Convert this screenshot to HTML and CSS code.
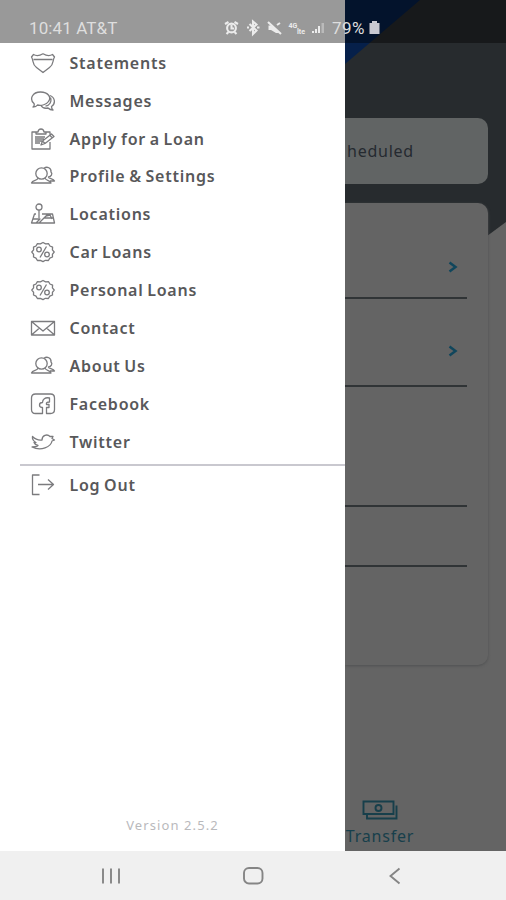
FILE: index.html
```html
<!DOCTYPE html>
<html lang="en">
<head>
<meta charset="utf-8">
<title>Menu</title>
<link rel="stylesheet" href="styles.css">
</head>
<body>
<svg class="defs" aria-hidden="true">
  <symbol id="people" viewBox="0 0 26 24"><circle cx="11.500" cy="9.500" r="5.700"/><path d="M8 14C7.500 17 2.500 15.500 1.500 19H21C20 15.500 15.500 17 15 14M14 4.300C17 2 21.500 4 21 8C23 10 21 12.500 18.500 13C19 15 23.500 14 24.500 17H20"/></symbol>
  <symbol id="percent" viewBox="0 0 26 24"><path d="M13 2.500l2.600 1.400 3-.2 1.300 2.300 2.700 1.200-.2 2.700L24.200 12l-1.800 2.300.1 2.700-2.700 1.200-1.400 2.300-3-.2L13 21.600l-2.600-1.300-3 .2L6 18.200 3.500 17l.1-2.700L1.800 12l1.800-2.200L3.500 7.200 6 6l1.400-2.300 3 .2zM16.500 6.500l-6.500 11"/><circle cx="9" cy="9.500" r="2.300"/><circle cx="17" cy="14.500" r="2.300"/></symbol>
</svg>
<div class="phone">
  <div class="screen">
    <nav class="drawer">
      <ul class="menu">
        <li><svg viewBox="0 0 26 24"><path d="M3.500 3.500C6 5 10 4.500 13 2.800C16 4.500 20 5 22.500 3.500L24.500 6C22 10 24.500 12.500 19.500 16.500L13 21.500L6.500 16.500C1.500 12.500 4 10 1.500 6ZM3.500 8.500H22.500"/></svg><span>Statements</span></li>
        <li><svg viewBox="0 0 26 24"><path d="M4 14.500C-1 10 2.500 3 10.500 3S21.500 8.500 18.500 12.500C16.500 15.500 11.500 17 7.500 16C6.500 17.500 5 18 3 18C4.500 16.800 4.500 15.800 4 14.500ZM20 6.500C25 8.500 26 14.500 21.500 17.500C21.500 19 22 20 23 21C20.500 21 19 20 18 19C14.500 19.700 12 18.500 11 16.500M20.500 8.500C22 13 19.500 16.500 15.500 17.200"/></svg><span>Messages</span></li>
        <li><svg viewBox="0 0 26 24"><path d="M8 5H2V22H20V15M14 5H20V8M6 7V5H8C8.500 1 13.500 1 14 5H16V7ZM5 10H15M5 12H14M5 14H12M5 16H10M11 18L12.500 14L21.500 7L24 9.500L15 16.500ZM12.500 14L15 16.500M20 8.500L22.500 11"/></svg><span>Apply for a Loan</span></li>
        <li><svg><use href="#people"/></svg><span>Profile &amp; Settings</span></li>
        <li><svg viewBox="0 0 26 24"><circle cx="9" cy="5" r="3"/><path d="M9 8V16M6 12H4.500L1.500 21H24.500L22.500 12H12M3 17H10L6 21M9 21L18 12M14 16H23M16 14L20 13L22 17"/></svg><span>Locations</span></li>
        <li><svg><use href="#percent"/></svg><span>Car Loans</span></li>
        <li><svg><use href="#percent"/></svg><span>Personal Loans</span></li>
        <li><svg viewBox="0 0 26 24"><path d="M1.500 5.500H24.500V19H1.500ZM1.500 5.500L13 15L24.500 5.500M1.500 19L9.500 12M24.500 19L16.500 12"/></svg><span>Contact</span></li>
        <li><svg><use href="#people"/></svg><span>About Us</span></li>
        <li><svg viewBox="0 0 26 24"><path d="M12.500 21.500H5.500Q1.500 21.500 1.500 17.500V6Q1.500 2 5.500 2H20.500Q24.500 2 24.500 6V17.500Q24.500 21.500 20.500 21.500H16.500V15.500H19V12.500H16.500C16 10.500 17 10 19.500 10V6C15 5 12.500 7.500 12.500 10.500C10.500 10.500 9.500 11.500 9.500 13C9.500 14.500 10.500 15.500 12.500 15.500Z"/></svg><span>Facebook</span></li>
        <li><svg viewBox="0 0 26 24"><path d="M2.500 6.500C5.500 9.500 8 10.500 12 10C12 5.500 17 3.500 20 6.500L23 6.500L22 8.500L24.500 10L22 11C21 17 11 21.500 2 17C5 17 7 16.500 8 15.500C6 15 4.500 14 4 12.500H6C3.500 11 2 9 2.500 6.500Z"/></svg><span>Twitter</span></li>
      </ul>
      <div class="logout"><svg viewBox="0 0 26 24"><path d="M9.500 2H2.500V21.500H9.500M8 11.500H23.500M18 6.500L23.500 11.500L18 16.500"/></svg><span>Log Out</span></div>
      <p class="version">Version 2.5.2</p>
    </nav>
    <main class="behind">
      <section class="card scheduled">heduled</section>
      <section class="card accounts">
        <div class="row r1"><svg viewBox="0 0 10 12"><path d="M1.500 1.500L7.500 6L1.500 10.500"/></svg></div>
        <div class="row r2"><svg viewBox="0 0 10 12"><path d="M1.500 1.500L7.500 6L1.500 10.500"/></svg></div>
        <div class="row r3"></div>
        <div class="row r4"></div>
      </section>
      <div class="transfer"><svg viewBox="0 0 36 20"><path d="M1.500 1.500H31.500V14H1.500ZM34.500 5.500V18.500H5V15"/><circle cx="16.500" cy="8" r="3"/></svg><span>Transfer</span></div>
    </main>
    <header class="status">
      <span class="carrier">10:41 AT&amp;T</span>
      <svg class="signals" viewBox="0 0 104 18">
        <g class="line"><circle cx="8.500" cy="9" r="4.400"/><path d="M8.500 6V9.500H11M2 5L5.500 3M15 5L11.500 3M3.500 15L5.500 13M13.500 15L11.500 13"/><path d="M26.500 5L33.500 11.500L30 15V2.500L33.500 5.500L26.500 12M24 8.500H26M34 8.500H36.500"/><path d="M45 3L58 15M54 6L57 4"/></g>
        <path d="M45.500 6.500H48L51 9L56 14L53 14L48 11H45.500ZM89 14V12H91V14ZM92 14V10H94V14ZM95 14V7H97V14Z"/>
        <path class="weak" d="M98.500 14V4H101V14Z"/>
        <text x="65.500" y="9">4G</text>
        <text x="74" y="14.500">lte</text>
      </svg>
      <span class="charge">79%</span>
      <svg class="battery" viewBox="0 0 11 14"><path d="M3 0H8V2H10.500V13H.5V2H3Z"/></svg>
    </header>
  </div>
  <footer class="navbar">
    <svg viewBox="0 0 24 24"><path d="M4 4.500V19.500M12 4.500V19.500M20 4.500V19.500"/></svg>
    <svg viewBox="0 0 24 24"><rect x="3" y="4" width="18.500" height="15.500" rx="5"/></svg>
    <svg viewBox="0 0 24 24"><path d="M16.500 4.500L7.500 12L16.500 19.500"/></svg>
  </footer>
</div>
</body>
</html>
```
FILE: styles.css
```css
* { box-sizing: border-box; }
body { margin: 0; font-family: "Noto Sans", "Open Sans", sans-serif; }
svg { display: block; flex: none; fill: none; }
.defs { position: absolute; width: 0; height: 0; }
.phone { width: 506px; height: 900px; display: flex; flex-direction: column; overflow: hidden; }
.screen { position: relative; height: 851px; display: grid; grid-template-columns: 345px 161px; }

.drawer { background: #fff; padding-top: 43.8px; display: flex; flex-direction: column; color: #58585a; }
.menu { list-style: none; margin: 0; padding: 0 0 3.2px; }
.menu li, .logout { display: flex; align-items: center; gap: 14px; padding-left: 29.5px; height: 37.9px; font-size: 16px; font-weight: 600; line-height: 24px; letter-spacing: .75px; word-spacing: -1.2px; white-space: nowrap; }
.menu svg, .logout svg { width: 26px; height: 24px; stroke: #7b7b7e; stroke-width: 1.3; stroke-linejoin: round; }
.logout { margin-left: 20px; padding-left: 9.5px; border-top: 2px solid #c9c8cf; height: 41px; }
.version { margin: auto 0 16px; text-align: center; font-size: 13px; line-height: 20px; letter-spacing: 1.1px; color: #b9b9bc; }

.behind { background: #646464; display: flex; flex-direction: column; padding-top: 118px; position: relative; overflow: hidden; isolation: isolate; }
.behind::before, .behind::after { content: ""; position: absolute; z-index: -1; inset: 0; background: #272b2e; clip-path: polygon(0 0, 100% 0, 100% 222px, 0 341px); }
.behind::after { background: #06204a; clip-path: polygon(0 0, 75px 0, 0 64px); }
.card { width: 143px; background: #646464; border-radius: 0 10px 10px 0; flex: none; }
.scheduled { height: 66px; background: #616464; color: #252a30; font-size: 16px; line-height: 67px; letter-spacing: .75px; padding-left: 2px; }
.accounts { height: 462px; margin-top: 19px; padding-right: 21px; box-shadow: 0 1px 3px #505152; }
.row { border-bottom: 2px solid #303436; display: flex; justify-content: flex-end; }
.row svg { width: 10px; height: 12px; margin-right: 9px; stroke: #10465c; stroke-width: 2.5; }
.r1 { height: 96px; padding-top: 58px; }
.r2 { height: 88px; padding-top: 46px; }
.r3 { height: 120px; }
.r4 { height: 60px; }
.transfer { margin-top: auto; padding-bottom: 3px; display: flex; flex-direction: column; width: 70px; align-items: center; color: #173f4b; font-size: 16px; line-height: 24px; letter-spacing: .8px; }
.transfer svg { width: 36px; height: 20px; margin-bottom: 4px; stroke: #173f4b; stroke-width: 1.9; }

.status { position: absolute; inset: 0 0 auto; height: 42.5px; display: flex; align-items: center; padding: 12.5px 0 0 29px; background: rgba(0, 0, 0, .4); color: #dedede; font-family: Roboto, sans-serif; font-size: 17px; }
.carrier { width: 194px; letter-spacing: .1px; }
.signals { width: 104px; height: 18px; fill: #ececec; }
.signals .line { fill: none; stroke: #ececec; stroke-width: 2.1; }
.signals .weak { opacity: .4; }
.signals text { font: 700 7px Roboto, sans-serif; }
.charge { width: 41px; padding-left: 5px; letter-spacing: .5px; }
.battery { width: 11px; height: 14px; fill: #c9c9d2; margin-left: 1px; }
.navbar { height: 49px; background: #f0f0f0; display: flex; align-items: center; padding-left: 99px; gap: 118px; }
.navbar svg { width: 24px; height: 24px; stroke: #858585; stroke-width: 1.9; }
```
